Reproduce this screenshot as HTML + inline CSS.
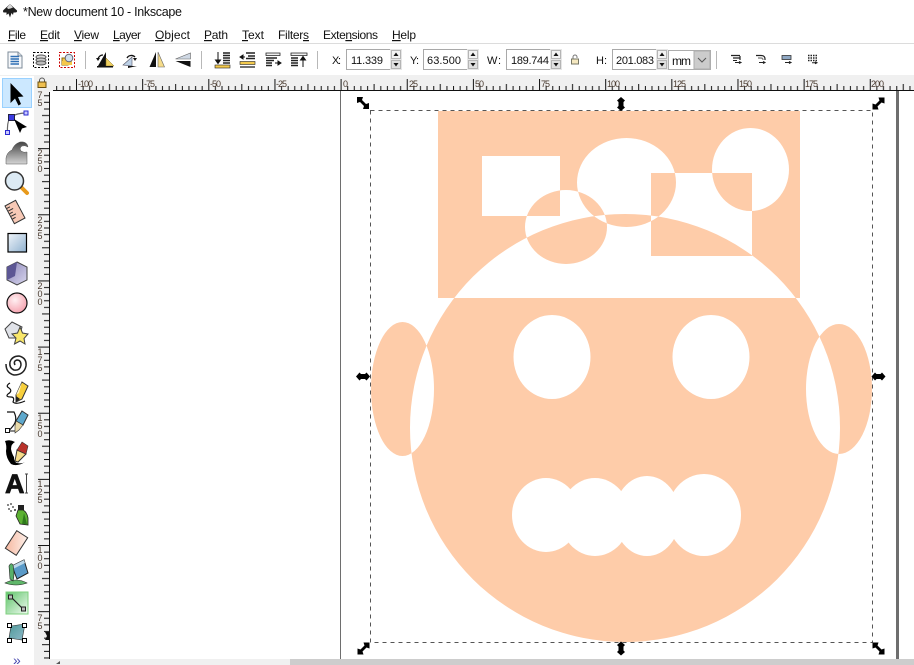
<!DOCTYPE html>
<html><head><meta charset="utf-8"><style>
html,body{margin:0;padding:0;background:#fff;width:914px;height:665px;overflow:hidden}
svg{display:block;position:absolute;left:0;top:0}
text{font-family:"Liberation Sans",sans-serif}
.m{font-size:12px;fill:#111}
.r{font-size:9px;fill:#4a3b30}
.n{font-size:11px;fill:#111}
</style></head><body>
<svg width="914" height="665" viewBox="0 0 914 665" xmlns="http://www.w3.org/2000/svg">
<defs>
<pattern id="hm" patternUnits="userSpaceOnUse" x="340.6" y="0" width="66.146" height="91"><rect x="0" y="79" width="1" height="11" fill="#111"/><rect x="6.6" y="86" width="1" height="4" fill="#111"/><rect x="13.2" y="86" width="1" height="4" fill="#111"/><rect x="19.8" y="86" width="1" height="4" fill="#111"/><rect x="26.5" y="86" width="1" height="4" fill="#111"/><rect x="33" y="84" width="1" height="6" fill="#111"/><rect x="39.7" y="86" width="1" height="4" fill="#111"/><rect x="46.3" y="86" width="1" height="4" fill="#111"/><rect x="52.9" y="86" width="1" height="4" fill="#111"/><rect x="59.5" y="86" width="1" height="4" fill="#111"/></pattern>
<pattern id="vm" patternUnits="userSpaceOnUse" x="0" y="82" width="50" height="66.146"><rect x="38" y="0" width="11" height="1" fill="#111"/><rect x="44" y="6.6" width="5" height="1" fill="#111"/><rect x="44" y="13.2" width="5" height="1" fill="#111"/><rect x="44" y="19.8" width="5" height="1" fill="#111"/><rect x="44" y="26.5" width="5" height="1" fill="#111"/><rect x="42" y="33" width="7" height="1" fill="#111"/><rect x="44" y="39.7" width="5" height="1" fill="#111"/><rect x="44" y="46.3" width="5" height="1" fill="#111"/><rect x="44" y="52.9" width="5" height="1" fill="#111"/><rect x="44" y="59.5" width="5" height="1" fill="#111"/></pattern>
<linearGradient id="gb" x1="0" y1="0" x2="1" y2="1"><stop offset="0" stop-color="#f0f5fa"/><stop offset="1" stop-color="#8fb1cf"/></linearGradient>
<linearGradient id="gw" x1="0" y1="0" x2="0" y2="1"><stop offset="0" stop-color="#444"/><stop offset="1" stop-color="#d5d5d5"/></linearGradient>
<radialGradient id="gp" cx=".4" cy=".35" r=".75"><stop offset="0" stop-color="#fff0f2"/><stop offset="1" stop-color="#f59aa8"/></radialGradient>
<linearGradient id="gg" x1="0" y1="0" x2="1" y2="1"><stop offset="0" stop-color="#5fc46a"/><stop offset="1" stop-color="#f2fbf2"/></linearGradient>
<linearGradient id="gt" x1="0" y1="0" x2="1" y2="1"><stop offset="0" stop-color="#4f9a9a"/><stop offset="1" stop-color="#8fb9c9"/></linearGradient>
<linearGradient id="gv" x1="0" y1="0" x2="1" y2="1"><stop offset="0" stop-color="#8a84b8"/><stop offset="1" stop-color="#d9d7ee"/></linearGradient>
<linearGradient id="ge" x1="0" y1="1" x2="1" y2="0"><stop offset="0" stop-color="#f6b8a0"/><stop offset="1" stop-color="#fdf0ea"/></linearGradient>
<g id="arr"><path d="M-6,-6 H0 L-1,-3 L3,1 L6,0 V6 H0 L1,3 L-3,-1 L-6,0 Z" fill="#000"/></g>
<g id="vr"><path d="M0,-7 L4,-3.500 L2.500,-2 V2 L4,3.500 L0,7 L-4,3.500 L-2.500,2 V-2 L-4,-3.500 Z" fill="#000"/></g>
</defs>

<rect width="914" height="665" fill="#fff"/>
<!-- title -->
<path d="M10,4 L17,10.500 Q17.500,12.500 15,12.500 L13.500,12.500 L13,15 L11.500,13 L10,17.500 L8.500,13.500 L6.500,15 L6.500,12.500 L3.500,12.500 Q2.500,11 3.500,10 Z" fill="#1f1f1f"/>
<path d="M10,4 L13,7.500 L10.500,8.500 L8,9 L7,7.500 Z" fill="#d8d8d8"/>
<text x="23" y="16" class="m" textLength="159" lengthAdjust="spacing" style="font-size:12.500px">*New document 10 - Inkscape</text>
<!-- menu -->
<text x="8" y="39" class="m" textLength="18"><tspan text-decoration="underline">F</tspan>ile</text>
<text x="40" y="39" class="m" textLength="20"><tspan text-decoration="underline">E</tspan>dit</text>
<text x="74" y="39" class="m" textLength="25"><tspan text-decoration="underline">V</tspan>iew</text>
<text x="113" y="39" class="m" textLength="28"><tspan text-decoration="underline">L</tspan>ayer</text>
<text x="155" y="39" class="m" textLength="35"><tspan text-decoration="underline">O</tspan>bject</text>
<text x="204" y="39" class="m" textLength="24"><tspan text-decoration="underline">P</tspan>ath</text>
<text x="242" y="39" class="m" textLength="22"><tspan text-decoration="underline">T</tspan>ext</text>
<text x="278" y="39" class="m" textLength="31">Filter<tspan text-decoration="underline">s</tspan></text>
<text x="323" y="39" class="m" textLength="55">Exte<tspan text-decoration="underline">n</tspan>sions</text>
<text x="392" y="39" class="m" textLength="24"><tspan text-decoration="underline">H</tspan>elp</text>
<rect x="0" y="43" width="914" height="1" fill="#dcdcdc"/>

<!-- top toolbar icons -->
<g transform="translate(15,60)"><path d="M-7,-8 H3 L7,-4 V8 H-7 Z" fill="#f6f8fb" stroke="#7d8b99"/><path d="M3,-8 V-4 H7" fill="#d5dde6" stroke="#7d8b99"/><path d="M-4.500,-3.500 H4 M-4.500,-1 H4 M-4.500,1.500 H4 M-4.500,4 H4" stroke="#2f6fb5" stroke-width="1.400"/></g>
<g transform="translate(41,60)"><rect x="-7.500" y="-7.500" width="15" height="15" fill="none" stroke="#000" stroke-dasharray="2 1.500"/><ellipse cx="0" cy="-3" rx="5" ry="2" fill="#ddd" stroke="#555"/><ellipse cx="0" cy="0" rx="5" ry="2" fill="#ccc" stroke="#555"/><ellipse cx="0" cy="3" rx="5" ry="2" fill="#bbb" stroke="#555"/></g>
<g transform="translate(67,60)"><rect x="-7.500" y="-7.500" width="15" height="15" fill="none" stroke="#c00" stroke-dasharray="2 1.500"/><path d="M-5,-2 H1 V5 H-5 Z" fill="#f5c84a" stroke="#8a6a12"/><path d="M-5,1 H5 V5 H-5Z" fill="#f5c84a"/><circle cx="2" cy="-2" r="3.800" fill="#cfe0ee" stroke="#667"/></g>
<rect x="85" y="51" width="1" height="18" fill="#b8b8b8"/>
<g transform="translate(104,60)"><path d="M2,-8 L2,6 L-6,6 Z" fill="#111"/><path d="M2,-2 L10,6 H2 Z" fill="#f0d060" stroke="#8a7520" stroke-width=".5"/><path d="M-6,-1 A5,5 0 0 1 -1,-5" fill="none" stroke="#111" stroke-width="1.300"/><path d="M-8,-2 L-4,-2 L-6,1 Z" fill="#111"/><rect x="-7" y="6" width="16" height="1.500" fill="#111"/></g>
<g transform="translate(129,60)"><path d="M-6,5 L3,-3 L3,6 Z" fill="#bcd0e6" stroke="#556" stroke-width=".6"/><path d="M-2,-2 A5,5 0 0 1 6,-3" fill="none" stroke="#111" stroke-width="1.300"/><path d="M4,-2 L8,-2 L6,1 Z" fill="#111"/><path d="M-1,6 H8 L-1,8Z" fill="#111"/></g>
<g transform="translate(157,60)"><path d="M-1,-8 V7 H-7.500 Z" fill="#111"/><path d="M1,-8 V7 H7.500 Z" fill="#f6dc8a" stroke="#666" stroke-width=".6"/></g>
<g transform="translate(183,60)"><path d="M7.500,-1 H-7.500 L7.500,-7 Z" fill="#cfd8e4" stroke="#666" stroke-width=".6"/><path d="M7.500,1 H-7.500 L7.500,7 Z" fill="#111"/></g>
<rect x="201" y="51" width="1" height="18" fill="#b8b8b8"/>
<g transform="translate(222,60)"><rect x="-7" y="5" width="15" height="3" fill="#f2c94c" stroke="#222" stroke-width=".6"/><path d="M1,-7 H8 M1,-4.500 H8 M1,-2 H8 M1,.5 H8 M1,3 H8" stroke="#222" stroke-width="1.400"/><path d="M-4,-8 V2 M-6.500,0 L-4,3.500 L-1.500,0Z" stroke="#111" fill="#111"/></g>
<g transform="translate(247,60)"><path d="M-1,-7 H8 M1,-4 H8 M-1,-1.500 H8" stroke="#222" stroke-width="1.400"/><rect x="-7" y="1.500" width="15" height="3" fill="#f2c94c" stroke="#222" stroke-width=".6"/><path d="M-7,7 H8" stroke="#222" stroke-width="1.300"/><path d="M-7,-3 H-2 M-7,-3 L-4,-5 V-1 Z" stroke="#111" fill="#111"/></g>
<g transform="translate(273,60)"><path d="M-7,-7 H7 V-4.500 H-7 Z" fill="#eee" stroke="#222" stroke-width=".8"/><path d="M-7,-2 H4 M-7,.5 H1 M-7,3 H-1 M-7,5.500 H-1" stroke="#222" stroke-width="1.500"/><path d="M2,3 H7 M5,1 L8,3 L5,5Z" stroke="#111" fill="#111"/></g>
<g transform="translate(299,60)"><path d="M-8,-7 H8 V-4.500 H-8 Z" fill="#eee" stroke="#222" stroke-width=".8"/><path d="M-8,-2 H-1 M-8,.5 H-1 M-8,3 H-1 M-8,5.500 H-1" stroke="#222" stroke-width="1.500"/><path d="M4,7 V-2 M1.500,0 L4,-3.500 L6.500,0Z" stroke="#111" fill="#111"/></g>
<rect x="317" y="51" width="1" height="18" fill="#b8b8b8"/>

<!-- fields -->
<text x="332" y="64" class="n" textLength="9">X:</text>
<rect x="346.500" y="49.500" width="44" height="20" fill="#fff" stroke="#a9a9a9"/><text x="351" y="64" class="n" textLength="32">11.339</text>
<text x="410" y="64" class="n" textLength="9">Y:</text>
<rect x="423.500" y="49.500" width="44" height="20" fill="#fff" stroke="#a9a9a9"/><text x="427" y="64" class="n" textLength="34">63.500</text>
<text x="487" y="64" class="n" textLength="14">W:</text>
<rect x="506.500" y="49.500" width="44" height="20" fill="#fff" stroke="#a9a9a9"/><text x="511" y="64" class="n" textLength="38">189.744</text>
<text x="596" y="64" class="n" textLength="11">H:</text>
<rect x="612.500" y="49.500" width="44" height="20" fill="#fff" stroke="#a9a9a9"/><text x="616" y="64" class="n" textLength="38">201.083</text>
<g>
<g transform="translate(390,49)"><rect width="12" height="21" fill="#e6e6e6"/><rect x="1.500" y="1.500" width="9" height="8" fill="#f2f2f2" stroke="#b5b5b5"/><rect x="1.500" y="11.500" width="9" height="8" fill="#e0e0e0" stroke="#b5b5b5"/><path d="M3.500,7 L6,3.500 L8.500,7Z M3.500,14 H8.500 L6,17.500Z" fill="#111"/></g>
<g transform="translate(467,49)"><rect width="12" height="21" fill="#e6e6e6"/><rect x="1.500" y="1.500" width="9" height="8" fill="#f2f2f2" stroke="#b5b5b5"/><rect x="1.500" y="11.500" width="9" height="8" fill="#e0e0e0" stroke="#b5b5b5"/><path d="M3.500,7 L6,3.500 L8.500,7Z M3.500,14 H8.500 L6,17.500Z" fill="#111"/></g>
<g transform="translate(550,49)"><rect width="12" height="21" fill="#e6e6e6"/><rect x="1.500" y="1.500" width="9" height="8" fill="#f2f2f2" stroke="#b5b5b5"/><rect x="1.500" y="11.500" width="9" height="8" fill="#e0e0e0" stroke="#b5b5b5"/><path d="M3.500,7 L6,3.500 L8.500,7Z M3.500,14 H8.500 L6,17.500Z" fill="#111"/></g>
<g transform="translate(656,49)"><rect width="12" height="21" fill="#e6e6e6"/><rect x="1.500" y="1.500" width="9" height="8" fill="#f2f2f2" stroke="#b5b5b5"/><rect x="1.500" y="11.500" width="9" height="8" fill="#e0e0e0" stroke="#b5b5b5"/><path d="M3.500,7 L6,3.500 L8.500,7Z M3.500,14 H8.500 L6,17.500Z" fill="#111"/></g>
</g>
<g transform="translate(575,60)"><path d="M-2,-1 V-3 A2,2 0 0 1 2,-3 V-2" fill="none" stroke="#777"/><rect x="-3.500" y="-1" width="7" height="5" fill="#f5e8c0" stroke="#776"/></g>
<rect x="668.500" y="50.500" width="42" height="19" fill="#fff" stroke="#adadad"/>
<rect x="694" y="51" width="16" height="18" fill="#ccc" stroke="#adadad"/>
<path d="M698,58 L702,62 L706,58" fill="none" stroke="#555"/>
<text x="672" y="65" class="n" textLength="19" style="font-size:12px">mm</text>
<rect x="716" y="51" width="1" height="18" fill="#b8b8b8"/>
<g fill="none" stroke="#222" stroke-width="1.200">
<g transform="translate(736,59)"><path d="M-5,-3.500 H4 M-3,-1 H4 M4,-3 V1"/><path d="M-3,1.500 H1 M-1,3.500 H4 M3,2.500 L5,3.500 L3,4.500" stroke-width="1"/></g>
<g transform="translate(761,59)"><path d="M-5,-3.500 H0 Q4,-3.500 4,0 V1"/><path d="M-3,-1 H0 Q2,-1 2,1" stroke="#777"/><path d="M-2,3.500 H3 M2,2.500 L4,3.500 L2,4.500" stroke-width="1"/></g>
<g transform="translate(787,59)"><rect x="-5" y="-3.500" width="9" height="4" fill="#8fa8c4" stroke="#333" stroke-width=".8"/><path d="M-2,3.500 H3 M2,2.500 L4,3.500 L2,4.500" stroke-width="1"/></g>
<g transform="translate(813,59)"><path d="M-5,-3.500 H4.500 M-5,-1 H4.500 M-5,1.500 H4.500" stroke-dasharray="1.500 1" stroke-width="1.500"/><path d="M-1,3.800 H3 M2,2.800 L4,3.800 L2,4.800" stroke-width="1"/></g>
</g>

<!-- ruler row -->
<rect x="34" y="75" width="880" height="16" fill="#f0f0f0"/>
<rect x="0" y="75" width="914" height="1" fill="#f0f0f0"/>
<rect x="34" y="75" width="16" height="590" fill="#f0f0f0"/>
<rect x="53" y="79" width="861" height="11" fill="url(#hm)"/>
<rect x="53" y="90" width="861" height="1" fill="#111"/>
<g>
<text x="78" y="87" class="r" textLength="15">-100</text>
<text x="144" y="87" class="r" textLength="11">-75</text>
<text x="210" y="87" class="r" textLength="11">-50</text>
<text x="276" y="87" class="r" textLength="11">-25</text>
<text x="343" y="87" class="r">0</text>
<text x="409" y="87" class="r" textLength="9">25</text>
<text x="475" y="87" class="r" textLength="9">50</text>
<text x="541" y="87" class="r" textLength="9">75</text>
<text x="607" y="87" class="r" textLength="13">100</text>
<text x="673" y="87" class="r" textLength="13">125</text>
<text x="739" y="87" class="r" textLength="13">150</text>
<text x="805" y="87" class="r" textLength="13">175</text>
<text x="871" y="87" class="r" textLength="13">200</text>
</g>
<!-- vertical ruler -->
<rect x="38" y="92" width="11" height="567" fill="url(#vm)"/>
<rect x="49" y="92" width="1" height="567" fill="#111"/>
<rect x="36" y="76" width="14" height="15" fill="#f0f0f0"/>
<g transform="translate(42,83)"><path d="M-2.500,-1 V-2.500 A2.500,2.500 0 0 1 2.500,-2.500 V-1" fill="none" stroke="#555"/><rect x="-4" y="-1" width="8" height="5.500" fill="#f0c050" stroke="#6a5010"/></g>
<g text-anchor="middle">
<text x="40" y="98" class="r">7</text><text x="40" y="106" class="r">5</text>
<text x="40" y="156" class="r">2</text><text x="40" y="164" class="r">5</text><text x="40" y="172" class="r">0</text>
<text x="40" y="223" class="r">2</text><text x="40" y="231" class="r">2</text><text x="40" y="239" class="r">5</text>
<text x="40" y="289" class="r">2</text><text x="40" y="297" class="r">0</text><text x="40" y="305" class="r">0</text>
<text x="40" y="355" class="r">1</text><text x="40" y="363" class="r">7</text><text x="40" y="371" class="r">5</text>
<text x="40" y="421" class="r">1</text><text x="40" y="429" class="r">5</text><text x="40" y="437" class="r">0</text>
<text x="40" y="487" class="r">1</text><text x="40" y="495" class="r">2</text><text x="40" y="503" class="r">5</text>
<text x="40" y="553" class="r">1</text><text x="40" y="561" class="r">0</text><text x="40" y="569" class="r">0</text>
<text x="40" y="621" class="r">7</text><text x="40" y="629" class="r">5</text>
</g>
<path d="M45,632 H49 V640 H45 L47,636 Z" fill="#111"/>

<!-- canvas -->
<rect x="50" y="91" width="864" height="568" fill="#fff"/>
<path fill="#fecca9" fill-rule="evenodd" d="
M438,111 H800 V298 H438 Z
M410,428 a215,214 0 1 0 430,0 a215,214 0 1 0 -430,0 Z
M482,156 H560 V216 H482 Z
M651,173 H752 V256 H651 Z
M525,227 a41,37 0 1 0 82,0 a41,37 0 1 0 -82,0 Z
M577,182.500 a49.500,44.500 0 1 0 99,0 a49.500,44.500 0 1 0 -99,0 Z
M712,169.500 a38.500,41.500 0 1 0 77,0 a38.500,41.500 0 1 0 -77,0 Z
M371,389 a31.500,67 0 1 0 63,0 a31.500,67 0 1 0 -63,0 Z
M806,389 a33,65 0 1 0 66,0 a33,65 0 1 0 -66,0 Z
M513.500,357 a38.500,42 0 1 0 77,0 a38.500,42 0 1 0 -77,0 Z
M672.500,357 a38.500,42 0 1 0 77,0 a38.500,42 0 1 0 -77,0 Z
"/>
<g fill="#fff"><ellipse cx="546" cy="515" rx="34" ry="37"/><ellipse cx="595" cy="517" rx="35" ry="39"/><ellipse cx="647" cy="516" rx="33" ry="40"/><ellipse cx="704" cy="515" rx="37" ry="41"/></g>
<rect x="340" y="91" width="1" height="568" fill="#6e6e6e"/>
<rect x="896" y="91" width="3" height="568" fill="#6e6e6e"/>
<rect x="370.500" y="110.500" width="502" height="532" fill="none" stroke="#555" stroke-dasharray="4 4"/>
<use href="#arr" transform="translate(363,103)"/>
<use href="#arr" transform="translate(878.500,103.500) scale(-1,1)"/>
<use href="#arr" transform="translate(363.500,648.500) scale(1,-1)"/>
<use href="#arr" transform="translate(878.500,648.500) scale(-1,-1)"/>
<use href="#vr" transform="translate(621,104)"/>
<use href="#vr" transform="translate(621,648.500)"/>
<use href="#vr" transform="translate(363,376.500) rotate(90)"/>
<use href="#vr" transform="translate(878.500,376.500) rotate(90)"/>

<!-- bottom scrollbar -->
<rect x="34" y="659" width="880" height="6" fill="#f0f0f0"/>
<rect x="290" y="659" width="624" height="6" fill="#cdcdcd"/>
<path d="M56,664 L60,661 V664Z" fill="#555"/>

<!-- left toolbar -->
<rect x="0" y="76" width="34" height="589" fill="#fff"/>
<rect x="2.500" y="78.500" width="29" height="29" fill="#cce8ff" stroke="#99d1ff"/>
<path d="M10.500,83 V103 L15,98.500 L18.500,105.500 L21,104 L18,97 L23.500,96.500 Z" fill="#000"/>

<!-- node -->
<path d="M7.500,132 Q7,120 11,117 Q17,113 26,113" fill="none" stroke="#666" stroke-width="1.200"/><rect x="8.500" y="114.500" width="6" height="6" fill="#3a3ae0" stroke="#224"/><rect x="24" y="111" width="4" height="4" fill="#c8c8ff" stroke="#2a2ad0"/><rect x="5.500" y="130.500" width="4" height="4" fill="#c8c8ff" stroke="#2a2ad0"/><path d="M14,119 L27,127 L22,128.500 L20,133 Z" fill="#000"/>
<!-- tweak -->
<path d="M6,164 V158 Q7,152 12,150 Q14,144 20,142 Q27,141 28,147 Q25,145 22,146 Q19,148 21,151 Q24,153 27,152 V164 Z" fill="url(#gw)" stroke="#555" stroke-width=".5"/>
<!-- zoom -->
<path d="M21,187 L27,193" stroke="#e89a1c" stroke-width="4" stroke-linecap="round"/>
<circle cx="14.500" cy="181" r="9" fill="#dceaf4" stroke="#333" stroke-width="1.500"/>
<!-- measure -->
<g transform="translate(15,212) rotate(-28)"><rect x="-6" y="-10" width="12" height="20" fill="#f7c9b6" stroke="#333"/><path d="M-5.500,-7 H-2 M-5.500,-4 H0 M-5.500,-1 H-2 M-5.500,2 H0 M-5.500,5 H-2" stroke="#333"/></g>
<!-- rect -->
<rect x="8" y="233.500" width="18.500" height="18.500" fill="url(#gb)" stroke="#000" stroke-width="1.200"/>
<!-- 3d -->
<path d="M17,262 L27,267 V280 L17,285 L7,280 V267 Z" fill="url(#gv)" stroke="#444"/><path d="M17,262 L7,267 V280 L15,276 Z" fill="#5c5694"/>
<!-- circle -->
<circle cx="17" cy="303" r="10" fill="url(#gp)" stroke="#111" stroke-width="1.200"/>
<!-- star -->
<path d="M12,322 L22,327 L19,338 L9,338 L5,329 Z" fill="#e0e2e8" stroke="#444"/>
<path d="M20,327 L22.500,333 L28,334 L24,338.500 L25,344 L20,341 L14.500,344 L16,338 L12,334 L17.500,333 Z" fill="#f8e66a" stroke="#444"/>
<!-- spiral -->
<path d="M15,365 Q13,361 17,360 Q21,360 21,365 Q20,371 14,370 Q9,368 10,362 Q12,356 19,356 Q27,358 26,366 Q24,375 14,375 Q6,373 6,364" fill="none" stroke="#222" stroke-width="1.500"/>
<!-- pencil -->
<path d="M10,383 Q5,386 9,388 Q13,391 8,394 Q5,397 11,397 Q15,397 13,402 Q16,405 25,401" fill="none" stroke="#111" stroke-width="1.200"/>
<path d="M22,382 L28,386 L22,399 L16,402 L16,395 Z" fill="#f7cf3c" stroke="#333"/><path d="M22,382 L19,393 L16,395Z" fill="#fff3c0"/><path d="M16,402 L16,396 L20,399 Z" fill="#222"/>
<!-- pen -->
<path d="M7,412 H14 Q18,420 13,426 Q9,431 8,431" fill="none" stroke="#111" stroke-width="1.200"/>
<rect x="5.500" y="428.500" width="4" height="4" fill="#fff" stroke="#111"/><path d="M10,431 H16" stroke="#111"/>
<path d="M22,411 L28,415 L23,425 L16,421 Z" fill="#5ea8cc" stroke="#333"/><path d="M16,421 L23,425 L19,430 L15,433 L15,426Z" fill="#e8d9a8" stroke="#333" stroke-width=".6"/>
<!-- calligraphy -->
<path d="M5,441 Q10,439 15,442 Q11,444 11,449 Q12,454 14,457 Q14,462 17,463 Q22,464 25,462 Q17,467 11,464 Q6,458 6,451 Q7,446 5,441Z" fill="#000"/>
<path d="M17,450 L26,454 L18,462 L15,461 Z" fill="#f6dc8a" stroke="#333"/><path d="M22,442 L28,446 L26,454 L17,450Z" fill="#b9322b" stroke="#333" stroke-width=".6"/>
<!-- text -->
<text x="5" y="493" style="font-size:27px;font-weight:bold" fill="#111" stroke="#111" stroke-width=".8" textLength="20">A</text>
<path d="M25,474 H28 M26.500,474 V493 M25,493 H28" stroke="#444" fill="none"/>
<!-- spray -->
<g fill="#333"><circle cx="8" cy="505" r=".9"/><circle cx="11" cy="504" r=".9"/><circle cx="13" cy="507" r=".9"/><circle cx="9" cy="509" r=".9"/><circle cx="15" cy="510" r="1"/><circle cx="11" cy="511" r=".9"/></g>
<path d="M18,510 H23 Q27,512 28,518 V525 L20,524 L16,516 Z" fill="#5cb132" stroke="#222" stroke-width=".8"/><rect x="18" y="505" width="6" height="5" fill="#222"/><path d="M24,513 L27,524 L22,524Z" fill="#2f7a1c"/>
<!-- eraser -->
<g transform="translate(16.500,543) rotate(33)"><rect x="-6.500" y="-10.500" width="13" height="21" fill="url(#ge)" stroke="#333"/></g>
<!-- bucket -->
<path d="M5,583 Q16,577 27,583 Q16,587 5,583Z" fill="#5fb76a" stroke="#222" stroke-width=".6"/>
<path d="M12,566 L24,560 L28,573 L17,579 Z" fill="#5a9ac8" stroke="#222"/>
<path d="M12,566 L24,560 L25,563 L13,569Z" fill="#bcd8ea"/>
<path d="M9,566 Q11,562 13,565 Q15,574 13,581 L10,579 Z" fill="#58b06a" stroke="#222" stroke-width=".6"/>
<!-- gradient -->
<rect x="6" y="592" width="22" height="22" fill="url(#gg)" stroke="#7fd07f"/>
<path d="M11,597 L23,609" stroke="#222" stroke-width="1.200"/><rect x="8.500" y="595" width="4" height="4" fill="#bbb" stroke="#222"/><rect x="21.500" y="607" width="4" height="4" fill="#bbb" stroke="#222"/>
<!-- bottom tool -->
<path d="M11,626 L25,624 L22,640 L9,638 Z" fill="url(#gt)" stroke="#333" stroke-width=".6"/>
<g fill="#fff" stroke="#000"><rect x="7.500" y="623.500" width="4" height="4"/><rect x="22.500" y="623.500" width="4" height="4"/><rect x="7.500" y="638.500" width="4" height="4"/><rect x="22.500" y="638.500" width="4" height="4"/></g>
<!-- more -->
<text x="13" y="665" style="font-size:14px" fill="#4a4ab0" textLength="10">»</text>
</svg>
</body></html>
